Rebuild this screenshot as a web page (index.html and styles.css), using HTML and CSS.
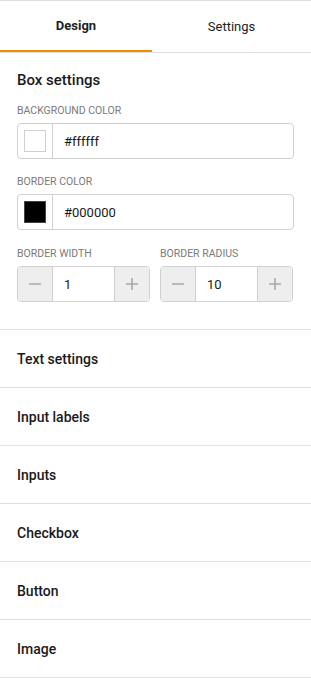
FILE: index.html
```html
<!DOCTYPE html>
<html>
<head>
<meta charset="utf-8">
<link rel="stylesheet" href="styles.css">
</head>
<body>
<div class="panel">
  <div class="tabs">
    <div class="tab active">Design</div>
    <div class="tab">Settings</div>
  </div>
  <div class="section box">
    <div class="heading">Box settings</div>
    <div class="label">BACKGROUND COLOR</div>
    <div class="colorfield">
      <div class="swatch-cell"><span class="swatch white"></span></div>
      <div class="value">#ffffff</div>
    </div>
    <div class="label">BORDER COLOR</div>
    <div class="colorfield">
      <div class="swatch-cell"><span class="swatch black"></span></div>
      <div class="value">#000000</div>
    </div>
    <div class="steppers">
      <div class="stepgroup">
        <div class="label">BORDER WIDTH</div>
        <div class="stepper">
          <div class="btn"><svg width="12" height="12" viewBox="0 0 12 12"><path d="M0 6h12" stroke="#a8a8a8" stroke-width="1.6"/></svg></div>
          <div class="num">1</div>
          <div class="btn"><svg width="12" height="12" viewBox="0 0 12 12"><path d="M0 6h12M6 0v12" stroke="#a8a8a8" stroke-width="1.6"/></svg></div>
        </div>
      </div>
      <div class="stepgroup">
        <div class="label">BORDER RADIUS</div>
        <div class="stepper">
          <div class="btn"><svg width="12" height="12" viewBox="0 0 12 12"><path d="M0 6h12" stroke="#a8a8a8" stroke-width="1.6"/></svg></div>
          <div class="num">10</div>
          <div class="btn"><svg width="12" height="12" viewBox="0 0 12 12"><path d="M0 6h12M6 0v12" stroke="#a8a8a8" stroke-width="1.6"/></svg></div>
        </div>
      </div>
    </div>
  </div>
  <div class="row">Text settings</div>
  <div class="row">Input labels</div>
  <div class="row">Inputs</div>
  <div class="row">Checkbox</div>
  <div class="row">Button</div>
  <div class="row">Image</div>
</div>
</body>
</html>
```
FILE: styles.css
```css
* { box-sizing: border-box; }
html, body { margin: 0; padding: 0; background: #fff; }
body { font-family: Roboto, "Liberation Sans", sans-serif; color: #1f1f1f; }
.panel { width: 311px; border-top: 1px solid #e0e0e0; }
.tabs { display: flex; height: 52px; border-bottom: 1px solid #e0e0e0; }
.tab { width: 155.5px; display: flex; align-items: center; justify-content: center; font-size: 13px; color: #222; padding-bottom: 1px; }
.tab.active { font-weight: 700; border-bottom: 2px solid #f28c00; padding-bottom: 0; width: 152px; }
.tab:not(.active) { flex: 1; }
.section.box { padding: 16px 17px 27px 17px; border-bottom: 1px solid #e0e0e0; }
.heading { font-size: 15px; font-weight: 500; line-height: 22px; color: #1a1a1a; margin-bottom: 13px; }
.label { font-size: 10.5px; line-height: 14px; color: #7a7a7a; margin-bottom: 5px; letter-spacing: 0; }
.colorfield { display: flex; height: 36px; border: 1px solid #d0d0d0; border-radius: 4px; margin-bottom: 16px; }
.colorfield + .label { margin-top: 0; }
.swatch-cell { width: 35px; border-right: 1px solid #d0d0d0; display: flex; align-items: center; justify-content: center; }
.swatch { display: block; width: 22px; height: 22px; border: 1px solid #cfcfcf; }
.swatch.white { background: #fff; }
.swatch.black { background: #000; border-color: #444; }
.value { display: flex; align-items: center; padding-left: 11px; font-size: 13px; color: #1a1a1a; }
.steppers { display: flex; gap: 10px; margin-top: 17px; }
.colorfield:nth-of-type(2) { margin-bottom: 0; }
.stepgroup { width: 133px; }
.stepper { display: flex; height: 36px; border: 1px solid #d0d0d0; border-radius: 4px; overflow: hidden; }
.btn { width: 35px; background: #eeeeee; display: flex; align-items: center; justify-content: center; }
.btn:first-child { border-right: 1px solid #d0d0d0; }
.btn:last-child { border-left: 1px solid #d0d0d0; }
.num { flex: 1; display: flex; align-items: center; padding-left: 11px; font-size: 13px; color: #1a1a1a; }
.row { height: 58px; border-bottom: 1px solid #e0e0e0; display: flex; align-items: center; padding-left: 17px; font-size: 14px; font-weight: 500; color: #1a1a1a; }
```
